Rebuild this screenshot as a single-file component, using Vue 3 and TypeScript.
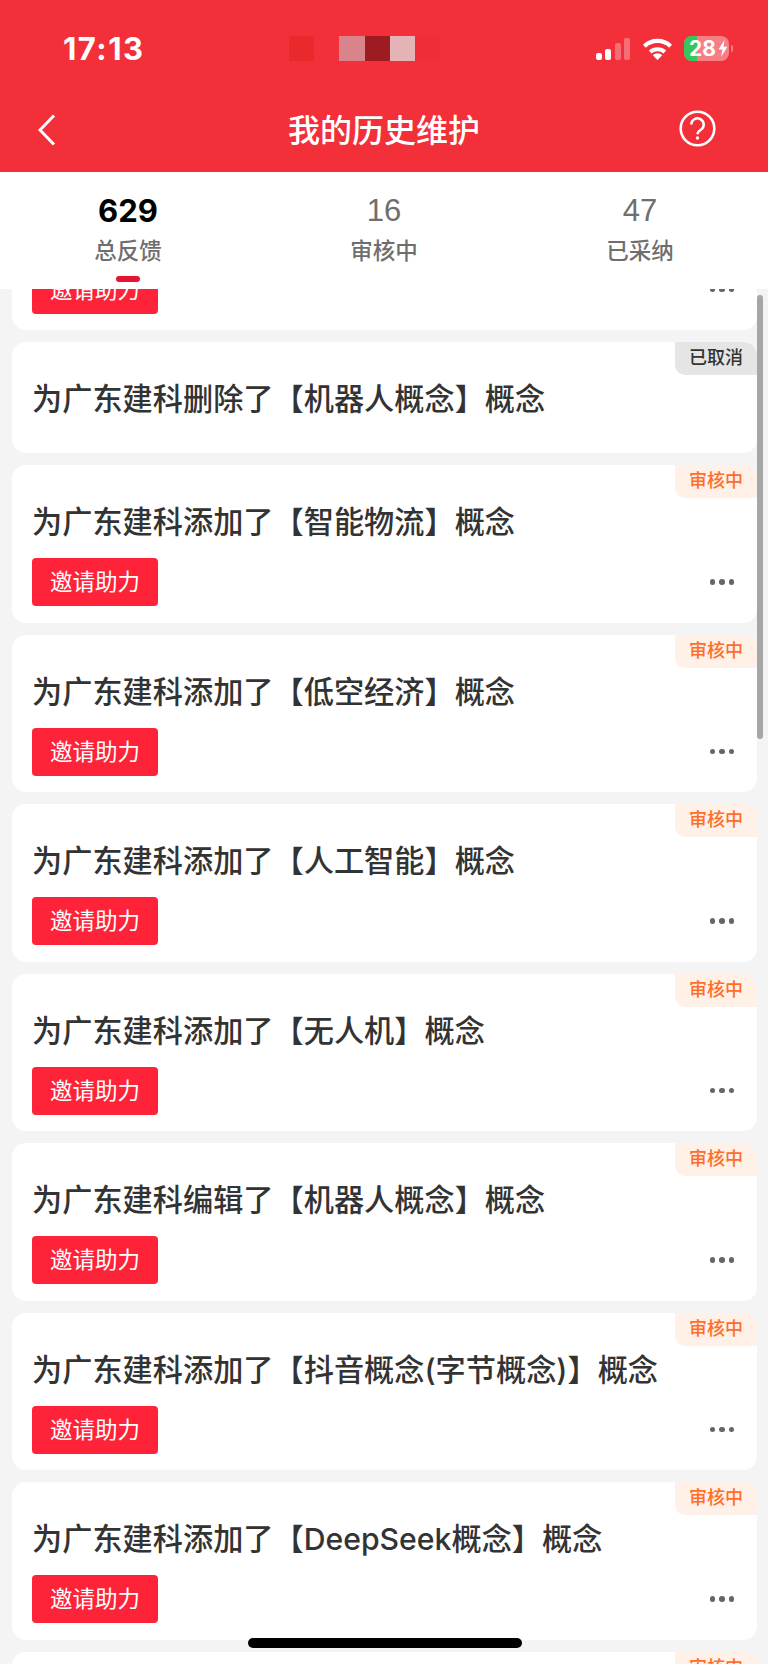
<script setup lang="ts">
interface Item {
  title: string
  status: 'pending' | 'cancelled'
  action: boolean
}

const stats = [
  { value: '629', label: '总反馈', active: true },
  { value: '16', label: '审核中', active: false },
  { value: '47', label: '已采纳', active: false },
]

const mosaic = ['#e82a2c', '#f33039', '#d9848a', '#9c1c22', '#e4b3b6', '#ee2d36']
const bars = [
  { h: 7, dim: false },
  { h: 11, dim: false },
  { h: 17, dim: true },
  { h: 22, dim: true },
]

const items: Item[] = [
  { title: '为广东建科添加了【机器人概念】概念', status: 'pending', action: true },
  { title: '为广东建科删除了【机器人概念】概念', status: 'cancelled', action: false },
  { title: '为广东建科添加了【智能物流】概念', status: 'pending', action: true },
  { title: '为广东建科添加了【低空经济】概念', status: 'pending', action: true },
  { title: '为广东建科添加了【人工智能】概念', status: 'pending', action: true },
  { title: '为广东建科添加了【无人机】概念', status: 'pending', action: true },
  { title: '为广东建科编辑了【机器人概念】概念', status: 'pending', action: true },
  { title: '为广东建科添加了【抖音概念(字节概念)】概念', status: 'pending', action: true },
  { title: '为广东建科添加了【DeepSeek概念】概念', status: 'pending', action: true },
  { title: '为广东建科添加了【华为概念】概念', status: 'pending', action: true },
]
</script>

<template>
  <div class="page">
    <header class="header">
      <div class="status">
        <span class="time">17:13</span>
        <div class="mosaic">
          <i v-for="(c, i) in mosaic" :key="i" :style="{ background: c }"></i>
        </div>
        <div class="sys">
          <div class="signal">
            <i v-for="(b, i) in bars" :key="i" :class="{ dim: b.dim }" :style="{ height: b.h + 'px' }"></i>
          </div>
          <svg class="wifi" width="31" height="23" viewBox="0 0 31 23" fill="none">
            <path d="M2.4 9.2A19 19 0 0 1 28.6 9.2" stroke="#fff" stroke-width="4.2" />
            <path d="M8.2 15A11 11 0 0 1 22.8 15" stroke="#fff" stroke-width="4" />
            <path d="M15.5 23L10.8 18.2A6.6 6.6 0 0 1 20.2 18.2Z" fill="#fff" />
          </svg>
          <div class="battery">
            <div class="level"></div>
            <span class="pct">28</span>
            <svg class="bolt" width="10" height="17" viewBox="0 0 10 17">
              <path d="M6.5 0L0.5 9.5H4.5L3 17L9.5 6.8H5.5Z" fill="#fff" />
            </svg>
          </div>
          <div class="nub"></div>
        </div>
      </div>
      <div class="nav">
        <svg class="back" width="18" height="32" viewBox="0 0 18 32" fill="none">
          <path d="M16 1.5L2 16L16 30.5" stroke="#fff" stroke-width="3" />
        </svg>
        <h1 class="heading">我的历史维护</h1>
        <svg class="help" width="37" height="37" viewBox="0 0 37 37" fill="none">
          <circle cx="18.5" cy="18.5" r="16.8" stroke="#fff" stroke-width="2.6" />
          <path d="M12.3 14.6a6.2 6.2 0 1 1 9.6 5.1c-2.3 1.5-3.4 2.4-3.4 4.6" stroke="#fff" stroke-width="2.5" />
          <circle cx="18.5" cy="28" r="1.7" fill="#fff" />
        </svg>
      </div>
    </header>

    <nav class="tabs">
      <div v-for="s in stats" :key="s.label" class="tab" :class="{ active: s.active }">
        <span class="num">{{ s.value }}</span>
        <span class="label">{{ s.label }}</span>
        <i class="mark"></i>
      </div>
    </nav>

    <main class="list">
      <article v-for="(item, i) in items" :key="i" class="card" :class="{ first: i === 0 }">
        <span class="tag" :class="item.status">{{ item.status === 'cancelled' ? '已取消' : '审核中' }}</span>
        <p class="title">{{ item.title }}</p>
        <div v-if="item.action" class="row">
          <button class="invite">邀请助力</button>
          <div class="more"><i></i><i></i><i></i></div>
        </div>
      </article>
    </main>

    <div class="scrollbar"></div>
    <div class="home"></div>
  </div>
</template>

<style>
html,
body {
  margin: 0;
  background: #f4f4f4;
}
</style>

<style scoped>
.page {
  position: relative;
  width: 768px;
  height: 1664px;
  overflow: hidden;
  background: #f4f4f4;
  font-family: "Liberation Sans", "Noto Sans CJK SC", sans-serif;
  display: flex;
  flex-direction: column;
}
.header {
  height: 172px;
  background: #f3303a;
  color: #fff;
  flex: none;
}
.status {
  height: 72px;
  padding: 12px 35px 0 63px;
  display: flex;
  align-items: center;
}
.time {
  width: 226px;
  font-family: Inter, "Liberation Sans", sans-serif;
  font-size: 31px;
  font-weight: 700;
  letter-spacing: 1.5px;
}
.mosaic {
  display: flex;
  height: 25px;
}
.mosaic i {
  width: 25.2px;
  display: block;
}
.sys {
  margin-left: auto;
  display: flex;
  align-items: center;
}
.signal {
  display: flex;
  align-items: flex-end;
  gap: 3.3px;
  height: 22px;
  margin-right: 12px;
  margin-top: 1px;
}
.signal i {
  display: block;
  width: 6px;
  border-radius: 2px;
  background: #fff;
}
.signal i.dim {
  background: rgba(255, 255, 255, 0.3);
}
.wifi {
  margin-right: 11px;
}
.battery {
  position: relative;
  width: 45px;
  height: 25px;
  border-radius: 8px;
  overflow: hidden;
  background: rgba(255, 255, 255, 0.38);
  display: flex;
  align-items: center;
}
.level {
  position: absolute;
  left: 0;
  top: 0;
  bottom: 0;
  width: 13px;
  background: #35c759;
}
.pct {
  position: relative;
  margin-left: 5px;
  font-family: Inter, "Liberation Sans", sans-serif;
  font-size: 21px;
  line-height: 25px;
  font-weight: 700;
}
.bolt {
  position: relative;
  margin-left: 2px;
}
.nub {
  width: 2px;
  height: 7px;
  margin-left: 2px;
  border-radius: 0 2px 2px 0;
  background: rgba(255, 255, 255, 0.4);
}
.nav {
  height: 88px;
  padding: 0 38px;
  display: grid;
  grid-template-columns: 1fr auto 1fr;
  align-items: center;
}
.back {
  margin-top: 3px;
}
.help {
  justify-self: end;
  margin-right: 14px;
}
.heading {
  margin: 0;
  padding-top: 5px;
  font-size: 32px;
  line-height: 40px;
  font-weight: 500;
}
.tabs {
  flex: none;
  height: 117px;
  display: flex;
  background: #fff;
  position: relative;
  z-index: 1;
}
.tab {
  flex: 1;
  display: flex;
  flex-direction: column;
  align-items: center;
  padding-top: 21px;
  color: #6e6e6e;
}
.num {
  font-size: 31px;
  line-height: 36px;
}
.label {
  margin-top: 8px;
  font-size: 22.5px;
  line-height: 30px;
  font-weight: 500;
}
.mark {
  display: block;
  width: 24px;
  height: 6px;
  margin-top: 9px;
  border-radius: 3px;
}
.tab.active .num {
  color: #000;
  font-family: Inter, "Liberation Sans", sans-serif;
  font-weight: 700;
}
.tab.active .mark {
  background: #e8132f;
}
.list {
  flex: 1;
  min-height: 0;
  overflow: hidden;
  padding: 0 11px 0 12px;
  display: flex;
  flex-direction: column;
  gap: 12px;
}
.card {
  position: relative;
  flex: none;
  background: #fff;
  border-radius: 14px;
  padding: 37px 18px 0 20px;
  min-height: 111px;
  box-sizing: border-box;
}
.card.first {
  margin-top: -116.5px;
}
.tag {
  position: absolute;
  top: 0;
  right: 0;
  width: 82px;
  height: 33px;
  border-radius: 0 14px 0 10px;
  font-size: 18px;
  line-height: 33px;
  font-weight: 500;
  text-align: center;
}
.tag.pending {
  color: #ff6d2a;
  background: #fff0e8;
}
.tag.cancelled {
  color: #333;
  background: #e5e5e5;
}
.title {
  margin: 0;
  font-family: Inter, "Noto Sans CJK SC", sans-serif;
  font-size: 30.2px;
  line-height: 40px;
  font-weight: 500;
  color: #333;
}
.row {
  margin-top: 16px;
  padding-bottom: 16.5px;
  display: flex;
  align-items: center;
  justify-content: space-between;
}
.invite {
  width: 126px;
  height: 48px;
  padding: 0 0 4px;
  border: 0;
  border-radius: 4px;
  background: #ff2339;
  color: #fff;
  font: inherit;
  font-size: 22.5px;
}
.more {
  display: flex;
  gap: 4px;
  padding-right: 5px;
}
.more i {
  display: block;
  width: 5.5px;
  height: 5.5px;
  border-radius: 50%;
  background: #666;
}
.scrollbar {
  position: absolute;
  left: 757px;
  top: 295px;
  width: 6px;
  height: 444px;
  border-radius: 3px;
  background: #a6a6a6;
}
.home {
  position: absolute;
  left: 248px;
  top: 1638px;
  width: 274px;
  height: 10px;
  border-radius: 5px;
  background: #000;
}
</style>
